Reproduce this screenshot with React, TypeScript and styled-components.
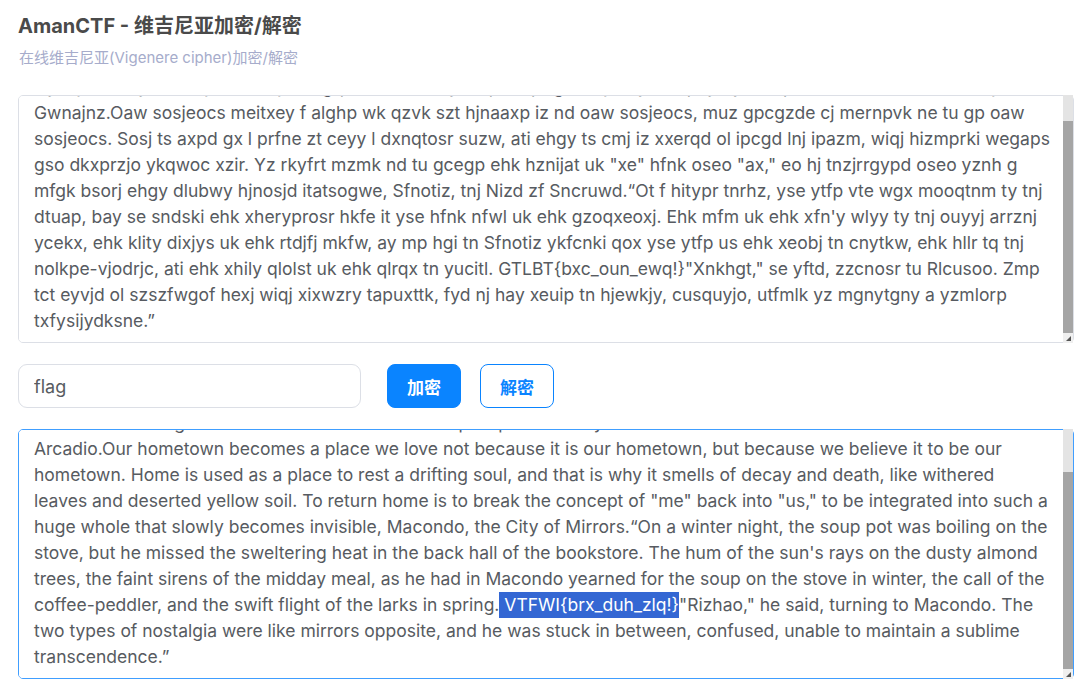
import React, { useEffect, useRef, useState } from "react";
import styled, { createGlobalStyle, css } from "styled-components";

const GlobalStyle = createGlobalStyle`
  html, body { margin: 0; padding: 0; background: #ffffff; }
  body { font-family: Inter, "Noto Sans CJK SC", "Noto Sans", sans-serif; }
  * { box-sizing: border-box; }
`;

const KEY = "flag";

function vigenere(text: string, start: number): string {
  let i = start;
  return text.replace(/[a-zA-Z]/g, (ch) => {
    const base = ch <= "Z" ? 65 : 97;
    const k = KEY.charCodeAt(i++ % KEY.length) - 97;
    return String.fromCharCode(((ch.charCodeAt(0) - base + k) % 26) + base);
  });
}

const PREFIX =
  "In the beginning the town had no name at all, only the river and the almond trees, and the men who came across the mountains looking for the sea and found instead a quiet place to stay with";

/* the passage, split where the cipher box wraps its lines */
const LINES = [
  "Arcadio.Our hometown becomes a place we love not because it is our hometown, but because we believe it to be our",
  "hometown. Home is used as a place to rest a drifting soul, and that is why it smells of decay and death, like withered leaves",
  'and deserted yellow soil. To return home is to break the concept of "me" back into "us," to be integrated into such a',
  "huge whole that slowly becomes invisible, Macondo, the City of Mirrors.\u201cOn a winter night, the soup pot was boiling on the",
  "stove, but he missed the sweltering heat in the back hall of the bookstore. The hum of the sun's rays on the dusty almond",
  "trees, the faint sirens of the midday meal, as he had in Macondo yearned for the soup on the stove in winter, the call of the",
  'coffee-peddler, and the swift flight of the larks in spring. VTFWI{brx_duh_zlq!}"Rizhao," he said, turning to Macondo. The',
  "two types of nostalgia were like mirrors opposite, and he was stuck in between, confused, unable to maintain a sublime",
  "transcendence.\u201d",
];

const PLAIN_FULL = PREFIX + "\n" + LINES.join(" ");
const CIPHER_FULL = vigenere(PREFIX, 0) + "\n" + vigenere(LINES.join("\n"), 3);

const FLAG = " VTFWI{brx_duh_zlq!}";

const Page = styled.div`
  display: flex;
  flex-direction: column;
  gap: 27px;
  width: 1090px;
  padding: 13px 16px 0 18px;
`;

const Header = styled.header`
  display: flex;
  flex-direction: column;
  gap: 9px;
`;

const Title = styled.h1`
  margin: 0;
  font-size: 20px;
  line-height: 26px;
  font-weight: 700;
  color: #4a4a4a;
`;

const Subtitle = styled.p`
  margin: 0 0 0 1px;
  font-size: 15px;
  line-height: 20px;
  color: #a6accb;
`;

const Workspace = styled.main`
  display: flex;
  flex-direction: column;
  gap: 21px;
`;

const Field = styled.div<{ $h: number }>`
  position: relative;
  height: ${(p) => p.$h}px;
`;

const TextBox = styled.textarea<{ $active?: boolean; $cipher?: boolean }>`
  display: block;
  width: 100%;
  height: 100%;
  padding: 8px 25px 8px 15px;
  border: 1px solid #dcdfe6;
  border-radius: 5px;
  font-family: Inter, "Noto Sans CJK SC", sans-serif;
  font-size: 17.5px;
  line-height: 26px;
  color: #575b61;
  background: #fff;
  outline: none;
  resize: none;
  overflow-y: scroll;
  overflow-x: hidden;
  scrollbar-width: none;
  &::-webkit-scrollbar {
    display: none;
  }
  ${(p) =>
    p.$cipher &&
    css`
      white-space: pre;
    `}
  ${(p) =>
    p.$active &&
    css`
      border-color: #409eff;
    `}

  &::selection {
    background: #3467d3;
    color: #ffffff;
  }
`;

const Track = styled.div`
  position: absolute;
  top: 0;
  right: 1px;
  bottom: 10px;
  width: 10px;
  background: #e4e4e4;
  pointer-events: none;
`;

const Thumb = styled.div`
  position: absolute;
  left: 0;
  right: 0;
  background: #a5a5a5;
`;

const Corner = styled.div`
  position: absolute;
  right: 1px;
  bottom: 0;
  width: 10px;
  height: 10px;
  background: #efefef;
  display: flex;
  align-items: center;
  justify-content: center;
  pointer-events: none;
`;

const Controls = styled.div`
  display: flex;
  align-items: center;
  gap: 19px;
`;

const KeyInput = styled.input`
  width: 343px;
  height: 44px;
  margin-right: 7px;
  padding: 0 15px;
  border: 1px solid #dcdfe6;
  border-radius: 9px;
  font-family: Inter, "Noto Sans CJK SC", sans-serif;
  font-size: 18px;
  color: #575b61;
  outline: none;
  background: #fff;
`;

const Button = styled.button<{ $primary?: boolean }>`
  width: 74px;
  height: 44px;
  border-radius: 8px;
  font-family: Inter, "Noto Sans CJK SC", sans-serif;
  font-size: 17px;
  font-weight: 700;
  cursor: pointer;
  border: 1px solid #0a84ff;
  background: ${(p) => (p.$primary ? "#0a84ff" : "#ffffff")};
  color: ${(p) => (p.$primary ? "#ffffff" : "#0a84ff")};
`;

type ThumbPos = { top: number; height: number };

function ScrollArea({
  value,
  height,
  active,
  cipher,
  selection,
}: {
  value: string;
  height: number;
  active?: boolean;
  cipher?: boolean;
  selection?: string;
}) {
  const ref = useRef<HTMLTextAreaElement>(null);
  const [thumb, setThumb] = useState<ThumbPos>({ top: 0, height: 0 });

  useEffect(() => {
    const t = ref.current;
    if (!t) return;
    if (selection) {
      t.focus();
      const start = value.indexOf(selection);
      t.setSelectionRange(start, start + selection.length);
    }
    const update = () => {
      t.scrollTop = t.scrollHeight;
      t.scrollLeft = 0;
      const trackH = height - 10;
      setThumb({
        top: (trackH * t.scrollTop) / t.scrollHeight,
        height: (trackH * t.clientHeight) / t.scrollHeight,
      });
    };
    update();
    requestAnimationFrame(update);
  }, [value, height, selection]);

  return (
    <Field $h={height}>
      <TextBox
        ref={ref}
        $active={active}
        $cipher={cipher}
        defaultValue={value}
        spellCheck={false}
        wrap={cipher ? "off" : "soft"}
      />
      <Track>
        <Thumb style={{ top: thumb.top, height: thumb.height }} />
      </Track>
      <Corner>
        <svg width="6" height="6" viewBox="0 0 6 6">
          <path d="M6 1 L6 6 L1 6 Z" fill="#555" />
        </svg>
      </Corner>
    </Field>
  );
}

export default function App() {
  return (
    <>
      <GlobalStyle />
      <Page>
        <Header>
          <Title>AmanCTF - 维吉尼亚加密/解密</Title>
          <Subtitle>在线维吉尼亚(Vigenere cipher)加密/解密</Subtitle>
        </Header>
        <Workspace>
          <ScrollArea value={CIPHER_FULL} height={248} cipher />
          <Controls>
            <KeyInput defaultValue="flag" spellCheck={false} />
            <Button $primary>加密</Button>
            <Button>解密</Button>
          </Controls>
          <ScrollArea value={PLAIN_FULL} height={250} active selection={FLAG} />
        </Workspace>
      </Page>
    </>
  );
}
